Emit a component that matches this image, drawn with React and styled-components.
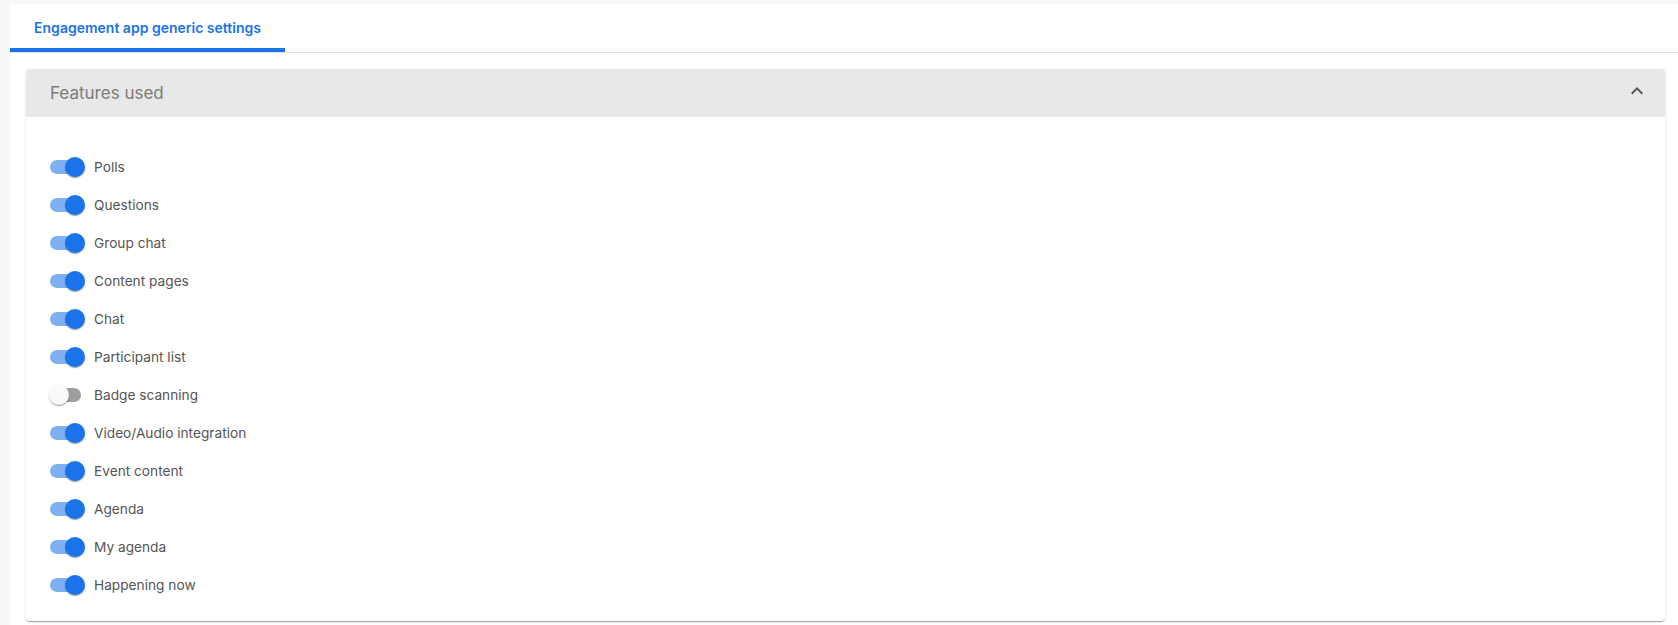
import styled, { createGlobalStyle } from 'styled-components';

const features = [
  { label: 'Polls', on: true },
  { label: 'Questions', on: true },
  { label: 'Group chat', on: true },
  { label: 'Content pages', on: true },
  { label: 'Chat', on: true },
  { label: 'Participant list', on: true },
  { label: 'Badge scanning', on: false },
  { label: 'Video/Audio integration', on: true },
  { label: 'Event content', on: true },
  { label: 'Agenda', on: true },
  { label: 'My agenda', on: true },
  { label: 'Happening now', on: true },
];

function App() {
  return (
    <>
      <GlobalStyle />
      <Page>
        <Card>
          <TabBar>
            <Tab>Engagement app generic settings</Tab>
          </TabBar>
          <Content>
            <Panel>
              <PanelHeader>
                <PanelTitle>Features used</PanelTitle>
                <svg width="24" height="24" viewBox="0 0 24 24">
                  <path fill="#555" d="M12 8l-6 6 1.41 1.41L12 10.83l4.59 4.58L18 14z" />
                </svg>
              </PanelHeader>
              <PanelBody>
                {features.map((f) => (
                  <Row key={f.label}>
                    <Switch>
                      <Track $on={f.on} />
                      <Thumb $on={f.on} />
                    </Switch>
                    <Label>{f.label}</Label>
                  </Row>
                ))}
              </PanelBody>
            </Panel>
          </Content>
        </Card>
      </Page>
    </>
  );
}

const GlobalStyle = createGlobalStyle`
  body {
    margin: 0;
    background: #f8f8f8;
    font-family: Inter, "Noto Sans", sans-serif;
  }
`;

const Page = styled.div`
  padding: 4px 0 0 10px;
  height: 625px;
  box-sizing: border-box;
`;

const Card = styled.div`
  background: #fff;
  height: 100%;
`;

const TabBar = styled.div`
  display: flex;
  height: 48px;
  border-bottom: 1px solid #e2e2e2;
`;

const Tab = styled.div`
  display: flex;
  align-items: center;
  justify-content: center;
  width: 275px;
  box-sizing: border-box;
  padding-top: 2px;
  font-size: 14px;
  font-weight: 600;
  color: #1a73e8;
  border-bottom: 4px solid #1a73e8;
  border-radius: 3px 3px 0 0;
`;

const Content = styled.div`
  padding: 16px 13px 0 16px;
`;

const Panel = styled.div`
  border-radius: 4px;
  overflow: hidden;
  box-shadow: 0 2px 1px -1px rgba(0, 0, 0, 0.2), 0 1px 1px 0 rgba(0, 0, 0, 0.14),
    0 1px 3px 0 rgba(0, 0, 0, 0.12);
`;

const PanelHeader = styled.div`
  display: flex;
  align-items: center;
  justify-content: space-between;
  height: 48px;
  padding: 0 16px 0 24px;
  background: #e8e8e8;
  svg {
    margin-top: -4px;
  }
`;

const PanelTitle = styled.div`
  font-size: 17px;
  color: #7b7b7b;
`;

const PanelBody = styled.div`
  padding: 31px 24px 17px;
`;

const Row = styled.div`
  display: flex;
  align-items: center;
  gap: 8px;
  height: 38px;
`;

const Switch = styled.div`
  position: relative;
  width: 36px;
  height: 20px;
  flex-shrink: 0;
`;

const Track = styled.div`
  position: absolute;
  left: 0;
  top: 3px;
  width: 31px;
  height: 14px;
  border-radius: 7px;
  background: ${(p) => (p.$on ? '#7fb0f2' : '#9e9e9e')};
`;

const Thumb = styled.div`
  position: absolute;
  top: 0;
  left: ${(p) => (p.$on ? '15px' : '-1px')};
  width: 20px;
  height: 20px;
  border-radius: 50%;
  background: ${(p) => (p.$on ? '#1a73e8' : '#fafafa')};
  box-shadow: 0 2px 1px -1px rgba(0, 0, 0, 0.2), 0 1px 1px 0 rgba(0, 0, 0, 0.14),
    0 1px 3px 0 rgba(0, 0, 0, 0.12);
`;

const Label = styled.span`
  font-size: 13.7px;
  color: #555;
`;

export default App;
